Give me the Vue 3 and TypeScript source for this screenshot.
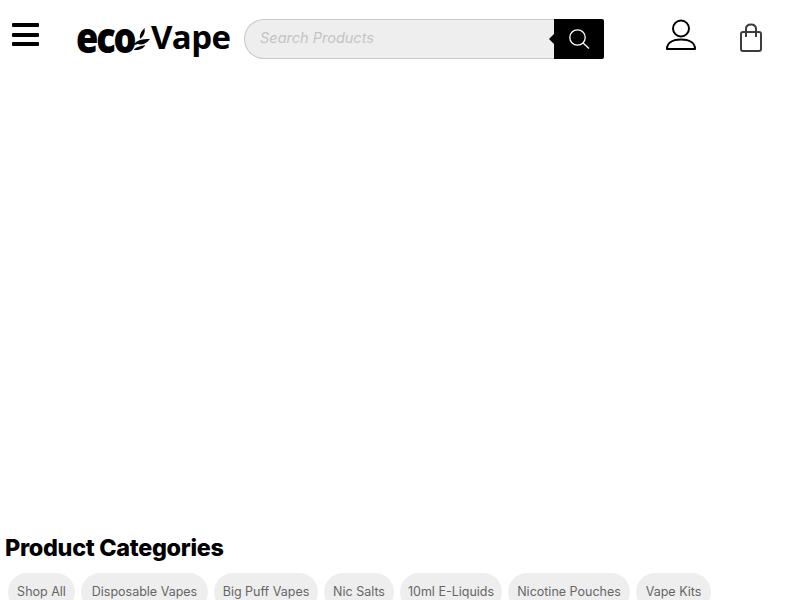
<script setup lang="ts">
const chips: { label: string; width: number }[] = [
  { label: 'Shop All', width: 67 },
  { label: 'Disposable Vapes', width: 127 },
  { label: 'Big Puff Vapes', width: 104 },
  { label: 'Nic Salts', width: 70 },
  { label: '10ml E-Liquids', width: 102 },
  { label: 'Nicotine Pouches', width: 122 },
  { label: 'Vape Kits', width: 75 },
]
</script>

<template>
  <div class="page">
    <header class="header">
      <button class="burger" aria-label="Menu"><span></span><span></span><span></span></button>
      <div class="logo">
        <span class="eco">eco</span>
        <svg class="leaf" width="17" height="22" viewBox="0 0 22 24" preserveAspectRatio="none">
          <path d="M15 0 C16 5 14 9 9 12 C8 8 10 4 15 0Z" fill="#000" />
          <path d="M1 18 C5 13 12 12 22 12 C18 17 12 19 6 17.5 C4.5 18 3 18.5 1 18Z" fill="#000" />
          <path d="M1 24 C4 20 10 20 16 18.5 C14 22 8 25 1 24Z" fill="#000" />
        </svg>
        <span class="vape">Vape</span>
      </div>
      <div class="search">
        <div class="field">Search Products</div>
        <div class="go">
          <svg width="22" height="22" viewBox="0 0 22 22" fill="none" stroke="#fff" stroke-width="1.3">
            <circle cx="9.5" cy="9.5" r="7.7" />
            <path d="M15 15 L21 20.5" />
          </svg>
        </div>
      </div>
      <svg class="user" width="32" height="32" viewBox="0 0 32 32" fill="none" stroke="#000" stroke-width="2">
        <circle cx="16" cy="9.5" r="8" />
        <path d="M2 30 C2 23.5 8 20.5 16 20.5 C24 20.5 30 23.5 30 30 Z" stroke-linejoin="round" />
      </svg>
      <svg class="bag" width="24" height="30" viewBox="0 0 24 30" fill="none" stroke="#3f3a40" stroke-width="2">
        <rect x="2" y="9" width="20" height="19" rx="2" />
        <path d="M7 14 V6 C7 3 9 1.5 12 1.5 C15 1.5 17 3 17 6 V14" />
      </svg>
    </header>
    <main class="spacer"></main>
    <section class="categories">
      <h2 class="title">Product Categories</h2>
      <div class="chips">
        <a v-for="c in chips" :key="c.label" class="chip" :style="{ width: c.width + 'px' }">{{ c.label }}</a>
      </div>
    </section>
  </div>
</template>

<style scoped>
.page {
  width: 800px;
  height: 600px;
  overflow: hidden;
  display: flex;
  flex-direction: column;
  background: #fff;
  font-family: Inter, "Noto Sans", sans-serif;
}
.header {
  height: 78px;
  flex: none;
  display: flex;
  align-items: flex-start;
}
.burger {
  margin: 23px 0 0 12px;
  width: 27px;
  height: 23px;
  padding: 0;
  border: 0;
  background: none;
  display: flex;
  flex-direction: column;
  justify-content: space-between;
}
.burger span {
  display: block;
  height: 4px;
  background: #000;
  border-radius: 1px;
}
.logo {
  margin: 15px 0 0 37px;
  width: 168px;
  height: 44px;
  display: flex;
  align-items: center;
  color: #000;
}
.eco {
  font-family: "Open Sans", sans-serif;
  font-weight: 800;
  font-size: 42px;
  line-height: 44px;
  letter-spacing: -2.5px;
  transform: scaleX(0.86);
  transform-origin: left center;
  width: 58px;
  flex: none;
}
.leaf {
  margin: 3px 0 0 -1px;
  flex: none;
}
.vape {
  font-family: "Open Sans", sans-serif;
  font-weight: 700;
  font-size: 33px;
  line-height: 44px;
  margin-left: 1px;
  letter-spacing: -0.6px;
}
.search {
  margin: 19px 0 0 0;
  width: 360px;
  height: 40px;
  display: flex;
}
.field {
  flex: 1;
  box-sizing: border-box;
  background: #eee;
  border: 1px solid #c8c8c8;
  border-right: 0;
  border-radius: 20px 0 0 20px;
  padding-left: 15px;
  font-style: italic;
  font-size: 14.5px;
  line-height: 36px;
  color: #c4c4c4;
}
.go {
  position: relative;
  width: 50px;
  background: #000;
  border-radius: 0 2px 2px 0;
  display: flex;
  align-items: center;
  justify-content: center;
}
.go::before {
  content: "";
  position: absolute;
  left: -5px;
  top: 15px;
  border-style: solid;
  border-width: 5px 5px 5px 0;
  border-color: transparent #000 transparent transparent;
}
.user {
  margin: 19px 0 0 61px;
  flex: none;
}
.bag {
  margin: 23px 0 0 42px;
  flex: none;
}
.spacer {
  flex: 1;
}
.categories {
  flex: none;
  height: 68px;
}
.title {
  margin: 0 0 0 5px;
  font-size: 23.4px;
  line-height: 32px;
  font-weight: 800;
  color: #000;
  letter-spacing: -0.3px;
}
.chips {
  margin: 9px 0 0 8px;
  display: flex;
  gap: 6px;
}
.chip {
  flex: none;
  height: 38px;
  border-radius: 19px;
  background: #eee;
  font-size: 12.5px;
  line-height: 37px;
  text-align: center;
  white-space: nowrap;
  color: #666;
}
</style>
